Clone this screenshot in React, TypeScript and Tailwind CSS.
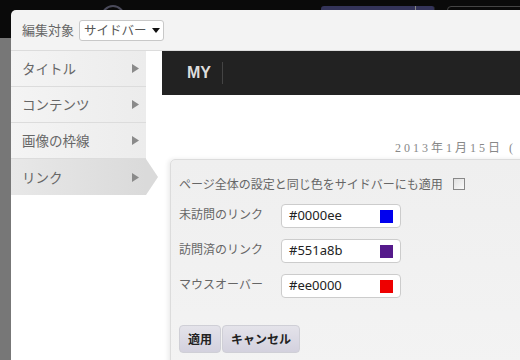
import React from 'react';

const jp = "font-['Noto_Sans_CJK_JP','Noto_Sans',sans-serif]";

const menuItems = ['タイトル', 'コンテンツ', '画像の枠線', 'リンク'];

const colorRows = [
  { label: '未訪問のリンク', value: '#0000ee', swatch: 'bg-[#0000ee]' },
  { label: '訪問済のリンク', value: '#551a8b', swatch: 'bg-[#551a8b]' },
  { label: 'マウスオーバー', value: '#ee0000', swatch: 'bg-[#ee0000]' },
];

const Arrow = () => (
  <svg width="7" height="9" viewBox="0 0 7 9" className="shrink-0">
    <path d="M0 0 L7 4.5 L0 9 Z" fill="#8a8a8a" />
  </svg>
);

const App: React.FC = () => {
  return (
    <div className={`relative w-[520px] h-[360px] overflow-hidden flex flex-col ${jp}`}>
      {/* page behind the dialog */}
      <div className="h-[38px] bg-[#0a0a0a] relative">
        <div className="absolute left-[101px] top-[5px] w-[24px] h-[24px] rounded-full border-2 border-[#4a4a5a]" />
        <div className="absolute left-[321px] top-[6px] w-[114px] h-[20px] rounded-[3px] bg-[#34345a] border-r border-[#222]">
          <div className="absolute left-[94px] top-0 h-full w-px bg-[#888]" />
        </div>
        <div className="absolute left-[447px] top-[6px] w-[90px] h-[20px] rounded-[4px] border border-[#444]" />
      </div>
      <div className="flex-1 bg-[#777]" />

      {/* dialog */}
      <div className="absolute left-[11px] top-[10px] right-0 bottom-0 bg-[#f3f3f3] rounded-tl-[5px] flex flex-col">
        <div className="h-[41px] flex items-center pl-[11px] gap-[5px] border-b border-[#dcdcdc] shrink-0">
          <span className="text-[13px] text-[#666]">編集対象</span>
          <div className="w-[85px] h-[21px] bg-white border border-[#c8c8c8] rounded-[3px] flex items-center pl-[4px] pr-[3px] justify-between">
            <span className="text-[12.5px] text-[#555]">サイドバー</span>
            <svg width="8" height="5" viewBox="0 0 8 5">
              <path d="M0 0 H8 L4 5 Z" fill="#111" />
            </svg>
          </div>
        </div>

        <div className="flex-1 flex bg-white relative">
          {/* side menu */}
          <div className="w-[135px] flex flex-col shrink-0">
            {menuItems.map((item, i) => {
              const active = i === menuItems.length - 1;
              return (
                <div
                  key={item}
                  className={`relative h-[36px] flex items-center justify-between pl-[11px] pr-[7px] ${
                    active
                      ? 'bg-gradient-to-r from-[#e8e8e8] to-[#dadada]'
                      : 'bg-gradient-to-r from-[#f4f4f4] to-[#ececec] border-b border-[#dcdcdc]'
                  }`}
                >
                  <span className="text-[13.5px] text-[#666]">{item}</span>
                  <Arrow />
                  {active && (
                    <div className="absolute left-full top-0 w-[12px] h-[36px] bg-[#dadada] [clip-path:polygon(0_0,100%_50%,0_100%)]" />
                  )}
                </div>
              );
            })}
          </div>

          {/* preview content */}
          <div className="flex-1 pl-[16px] flex flex-col">
            <div className="h-[44px] bg-[#222] flex items-center pl-[25px]">
              <span className="font-['Liberation_Sans',sans-serif] font-bold text-[16px] text-[#ddd]">MY</span>
              <div className="ml-[11px] w-px h-[22px] bg-[#444]" />
            </div>
            <div className="pt-[44px] pl-[233px] whitespace-nowrap font-['Liberation_Serif','Noto_Sans_CJK_JP',serif] text-[12px] tracking-[3px] text-[#888]">
              2013年1月15日 (
            </div>
          </div>

          {/* link settings panel */}
          <div className="absolute left-[159px] top-[108px] w-[400px] h-[260px] bg-gradient-to-b from-[#efefef] to-[#f4f4f4] border border-[#dcdcdc] rounded-[5px] shadow-[-2px_0_4px_rgba(0,0,0,0.08)] pl-[8px] pt-[15px] flex flex-col">
            <div className="flex items-center h-[18px]">
              <span className="text-[12px] text-[#666]">ページ全体の設定と同じ色をサイドバーにも適用</span>
              <div className="ml-[10px] w-[12px] h-[12px] border border-[#888] bg-gradient-to-br from-[#e0e0e0] to-[#fafafa]" />
            </div>
            <div className="flex flex-col gap-[11px] mt-[11px]">
              {colorRows.map((row) => (
                <div key={row.label} className="flex items-center">
                  <span className="w-[102px] text-[12px] text-[#666] -mt-[4px]">{row.label}</span>
                  <div className="w-[120px] h-[24px] bg-white border border-[#ccc] rounded-[4px] flex items-center pl-[7px] pr-[7px] justify-between">
                    <span className="font-['Noto_Sans',sans-serif] text-[13px] text-[#222]">{row.value}</span>
                    <div className={`w-[13px] h-[13px] ${row.swatch}`} />
                  </div>
                </div>
              ))}
            </div>
            <div className="flex mt-[27px] gap-[1px]">
              <button className="w-[42px] h-[28px] rounded-[4px] border border-[#cfcfd6] bg-gradient-to-b from-[#e4e3ea] to-[#d3d1de] text-[12px] font-bold text-[#222]">
                適用
              </button>
              <button className="w-[78px] h-[28px] rounded-[4px] border border-[#cfcfd6] bg-gradient-to-b from-[#e4e3ea] to-[#d3d1de] text-[12px] font-bold text-[#222]">
                キャンセル
              </button>
            </div>
          </div>
        </div>
      </div>
    </div>
  );
};

export default App;
